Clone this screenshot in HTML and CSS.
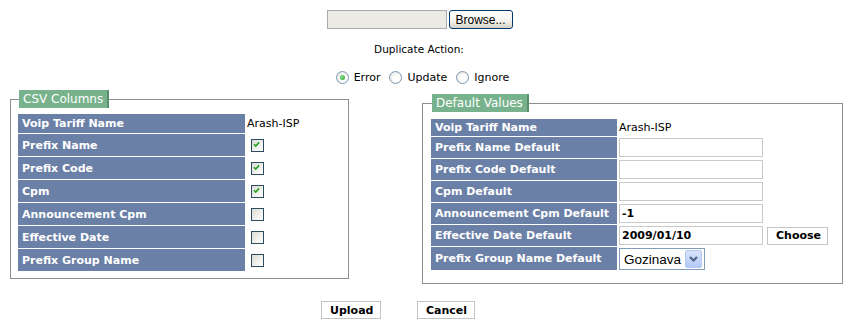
FILE: index.html
```html
<!DOCTYPE html>
<html lang="en">
<head>
  <meta charset="UTF-8">
  <title>Import Voip Tariff Prefixes</title>
  <link rel="stylesheet" href="styles.css">
</head>
<body>

<form class="import-form" onsubmit="return false">
  <div class="file-row">
    <span class="file-box"></span>
    <button type="button" class="browse-btn">Browse...</button>
  </div>

  <div class="dup-title">Duplicate Action:</div>

  <div class="dup-options">
    <label class="radio"><span class="radio-dot checked"></span>Error</label>
    <label class="radio"><span class="radio-dot"></span>Update</label>
    <label class="radio"><span class="radio-dot"></span>Ignore</label>
  </div>

  <div class="panels">
    <fieldset class="panel panel-left">
      <legend>CSV Columns</legend>
      <table class="grid">
        <tr class="first">
          <th>Voip Tariff Name</th>
          <td class="plain">Arash-ISP</td>
        </tr>
        <tr>
          <th>Prefix Name</th>
          <td><span class="check on"><svg viewBox="0 0 13 13"><path d="M3.5 6.2 L5.6 8.4 L9.6 4" /></svg></span></td>
        </tr>
        <tr>
          <th>Prefix Code</th>
          <td><span class="check on"><svg viewBox="0 0 13 13"><path d="M3.5 6.2 L5.6 8.4 L9.6 4" /></svg></span></td>
        </tr>
        <tr>
          <th>Cpm</th>
          <td><span class="check on"><svg viewBox="0 0 13 13"><path d="M3.5 6.2 L5.6 8.4 L9.6 4" /></svg></span></td>
        </tr>
        <tr>
          <th>Announcement Cpm</th>
          <td><span class="check"></span></td>
        </tr>
        <tr>
          <th>Effective Date</th>
          <td><span class="check"></span></td>
        </tr>
        <tr>
          <th>Prefix Group Name</th>
          <td><span class="check"></span></td>
        </tr>
      </table>
    </fieldset>

    <fieldset class="panel panel-right">
      <legend>Default Values</legend>
      <table class="grid">
        <tr class="first">
          <th>Voip Tariff Name</th>
          <td class="plain">Arash-ISP</td>
        </tr>
        <tr>
          <th>Prefix Name Default</th>
          <td><input type="text" class="field"></td>
        </tr>
        <tr>
          <th>Prefix Code Default</th>
          <td><input type="text" class="field"></td>
        </tr>
        <tr>
          <th>Cpm Default</th>
          <td><input type="text" class="field"></td>
        </tr>
        <tr>
          <th>Announcement Cpm Default</th>
          <td><input type="text" class="field" value="-1"></td>
        </tr>
        <tr>
          <th>Effective Date Default</th>
          <td><input type="text" class="field" value="2009/01/10"><button type="button" class="plain-btn choose-btn">Choose</button></td>
        </tr>
        <tr class="last">
          <th>Prefix Group Name Default</th>
          <td>
            <span class="select-box">
              <span class="select-text">Gozinava</span>
              <span class="select-arrow"><svg viewBox="0 0 15 16"><path d="M4 6 L7.5 9.5 L11 6" /></svg></span>
            </span>
          </td>
        </tr>
      </table>
    </fieldset>
  </div>

  <div class="actions">
    <button type="submit" class="plain-btn">Upload</button>
    <button type="button" class="plain-btn">Cancel</button>
  </div>
</form>

</body>
</html>
```

FILE: styles.css
```css
body {
  margin: 0;
  padding: 0;
  background: #fff;
  color: #000;
  font-family: "DejaVu Sans", Verdana, sans-serif;
  font-size: 11px;
}

.file-row {
  display: flex;
  justify-content: center;
  align-items: center;
  gap: 2px;
  padding-top: 10px;
  margin-right: 11px;
}
.file-box {
  width: 118px;
  height: 17px;
  background: #ecebe3;
  border: 1px solid #a5acb2;
}
.browse-btn {
  width: 64px;
  height: 19px;
  padding: 0;
  font-family: "Liberation Sans", Arial, sans-serif;
  font-size: 12px;
  color: #000;
  border: 1px solid #003c74;
  border-radius: 3px;
  background: linear-gradient(#ffffff, #f3f2ec 60%, #d6d0c5);
}

.dup-title {
  text-align: center;
  margin-top: 14px;
  padding-right: 12px;
  font-size: 10.5px;
}

.dup-options {
  display: flex;
  justify-content: center;
  gap: 9px;
  margin-top: 16px;
  padding-right: 5px;
}
.radio {
  display: flex;
  align-items: center;
  gap: 5px;
}
.radio-dot {
  width: 11px;
  height: 11px;
  border: 1px solid #7c97b2;
  border-radius: 50%;
  background: radial-gradient(circle at 60% 60%, #ffffff 30%, #dcdcd6 100%);
  position: relative;
}
.radio-dot.checked::after {
  content: "";
  position: absolute;
  left: 3px;
  top: 3px;
  width: 5px;
  height: 5px;
  border-radius: 50%;
  background: radial-gradient(circle at 40% 40%, #8ae28a, #21a121);
}

.panels {
  display: flex;
  justify-content: space-between;
  align-items: flex-start;
  padding: 0 7px 0 10px;
  margin-top: 6px;
}

.panel {
  margin: 0;
  border: 1px solid #8f8f8f;
  padding: 0 6px 6px 7px;
}
.panel legend {
  margin-left: 1px;
  padding: 2px 4px 2px 4px;
  background: #78b28c;
  border-right: 2px solid #58906b;
  color: #fff;
  font-size: 12px;
}
.panel-left {
  width: 324px;
}
.panel-right {
  width: 405px;
  margin-top: 4px;
  padding-left: 8px;
  padding-bottom: 12px;
}

.grid {
  border-collapse: separate;
  border-spacing: 0 1px;
  margin-top: 5px;
}
.panel-right .grid {
  margin-top: 6px;
}
.grid th {
  background: #6b80a7;
  color: #fff;
  font-weight: bold;
  text-align: left;
  padding: 0 4px;
  height: 22px;
  white-space: nowrap;
}
.grid tr.first th {
  height: 19px;
}
.grid td {
  padding: 0 2px;
}
.panel-left .grid th {
  width: 219px;
}
.panel-right .grid th {
  width: 178px;
  height: 21px;
}
.panel-right .grid tr.first th {
  height: 17px;
}
.panel-right .grid tr.last th {
  height: 22px;
}
.grid td.plain {
  font-size: 11px;
}

.check {
  display: block;
  width: 11px;
  height: 11px;
  margin-left: 4px;
  border: 1px solid #2b4c5e;
  background: linear-gradient(135deg, #dcdcd4, #ffffff);
}
.check svg {
  display: block;
  width: 11px;
  height: 11px;
  margin: -1px;
}
.check svg path {
  fill: none;
  stroke: #21a121;
  stroke-width: 1.8;
}

.field {
  box-sizing: border-box;
  width: 144px;
  height: 19px;
  margin: 0;
  padding: 0 2px;
  border: 1px solid #c9c9c9;
  font-family: "DejaVu Sans", Verdana, sans-serif;
  font-size: 11px;
  font-weight: bold;
  vertical-align: middle;
}

.plain-btn {
  height: 18px;
  padding: 0 8px;
  background: #fff;
  border: 1px solid #c4c4c4;
  font-family: "DejaVu Sans", Verdana, sans-serif;
  font-size: 11px;
  font-weight: bold;
  color: #000;
}
.choose-btn {
  margin-left: 4px;
  width: 61px;
  vertical-align: middle;
}

.select-box {
  display: inline-flex;
  align-items: center;
  height: 20px;
  border: 1px solid #7f9db9;
  margin-top: 1px;
}
.select-text {
  padding: 0 4px 0 4px;
  font-family: "Liberation Sans", Arial, sans-serif;
  font-size: 13.5px;
}
.select-arrow {
  display: block;
  width: 15px;
  height: 16px;
  margin-right: 2px;
  border: 1px solid #b5c8f3;
  border-radius: 2px;
  background: linear-gradient(#d7e3fd, #b3c9f6);
}
.select-arrow svg {
  display: block;
  width: 15px;
  height: 16px;
}
.select-arrow svg path {
  fill: none;
  stroke: #4d6185;
  stroke-width: 2;
}

.actions {
  display: flex;
  justify-content: center;
  gap: 36px;
  margin-top: 17px;
  padding-right: 54px;
}
.actions .plain-btn:first-child {
  width: 60px;
}
.actions .plain-btn:last-child {
  width: 58px;
}
```
